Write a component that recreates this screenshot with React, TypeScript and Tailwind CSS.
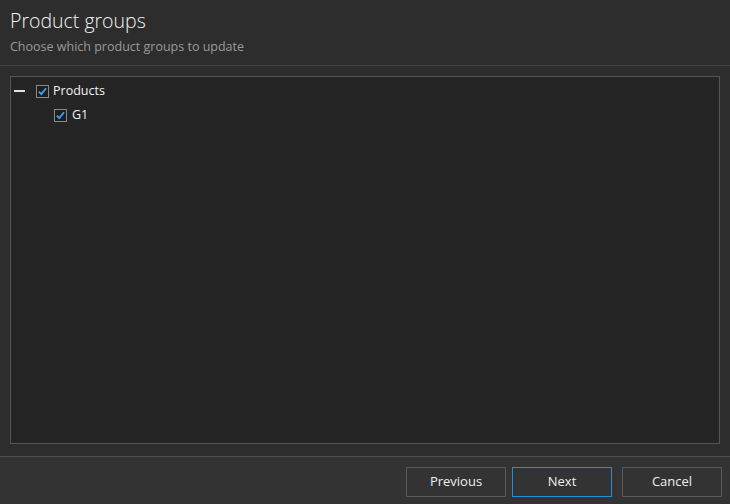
import React from 'react';

const Check = () => (
  <span className="w-[13px] h-[13px] border border-[#8a8a8a] bg-[#1e1e1e] flex items-center justify-center shrink-0">
    <svg viewBox="0 0 12 12" className="w-[11px] h-[11px]">
      <path d="M2 6.2 L4.7 8.9 L9.9 2.4" fill="none" stroke="#3ea0f0" strokeWidth="2" />
    </svg>
  </span>
);

export default function App() {
  return (
    <div className="w-[730px] h-[504px] flex flex-col bg-[#2d2d2d] text-white overflow-hidden" style={{ fontFamily: '"Open Sans", "Noto Sans", sans-serif' }}>
      {/* Header */}
      <div className="h-[66px] px-[10px] pt-[6px] border-b border-[#434343] shrink-0">
        <h1 className="text-[19.5px] leading-[30px] font-light text-[#f2f2f2]">Product groups</h1>
        <p className="text-[12.5px] leading-[18px] mt-[2px] text-[#9a9a9a]">Choose which product groups to update</p>
      </div>

      {/* Tree */}
      <div className="flex-1 px-[10px] pt-[10px] pb-[12px] bg-[#2d2d2d] flex">
        <div className="flex-1 border border-[#555555] bg-[#252525] pt-[2px] text-[12.5px]">
          <div className="flex items-center h-[24px]">
            <span className="w-[11px] h-[2px] bg-[#e0e0e0] ml-[3px] mr-[11px]" />
            <Check />
            <span className="ml-[4px] text-[#f4f4f4]">Products</span>
          </div>
          <div className="flex items-center h-[24px] pl-[43px]">
            <Check />
            <span className="ml-[5px] text-[#f4f4f4]">G1</span>
          </div>
        </div>
      </div>

      {/* Footer */}
      <div className="h-[48px] border-t border-[#505050] bg-[#333333] shrink-0 flex items-start justify-end pt-[10px] pr-[8px] gap-[6px] text-[13px]">
        <button className="w-[100px] h-[30px] border border-[#5a5a5a] bg-[#333333] text-[#f0f0f0]">Previous</button>
        <button className="w-[100px] h-[30px] border border-[#1d8ee0] bg-[#333333] text-[#f0f0f0]">Next</button>
        <button className="w-[100px] h-[30px] border border-[#5a5a5a] bg-[#333333] text-[#f0f0f0] ml-[4px]">Cancel</button>
      </div>
    </div>
  );
}
